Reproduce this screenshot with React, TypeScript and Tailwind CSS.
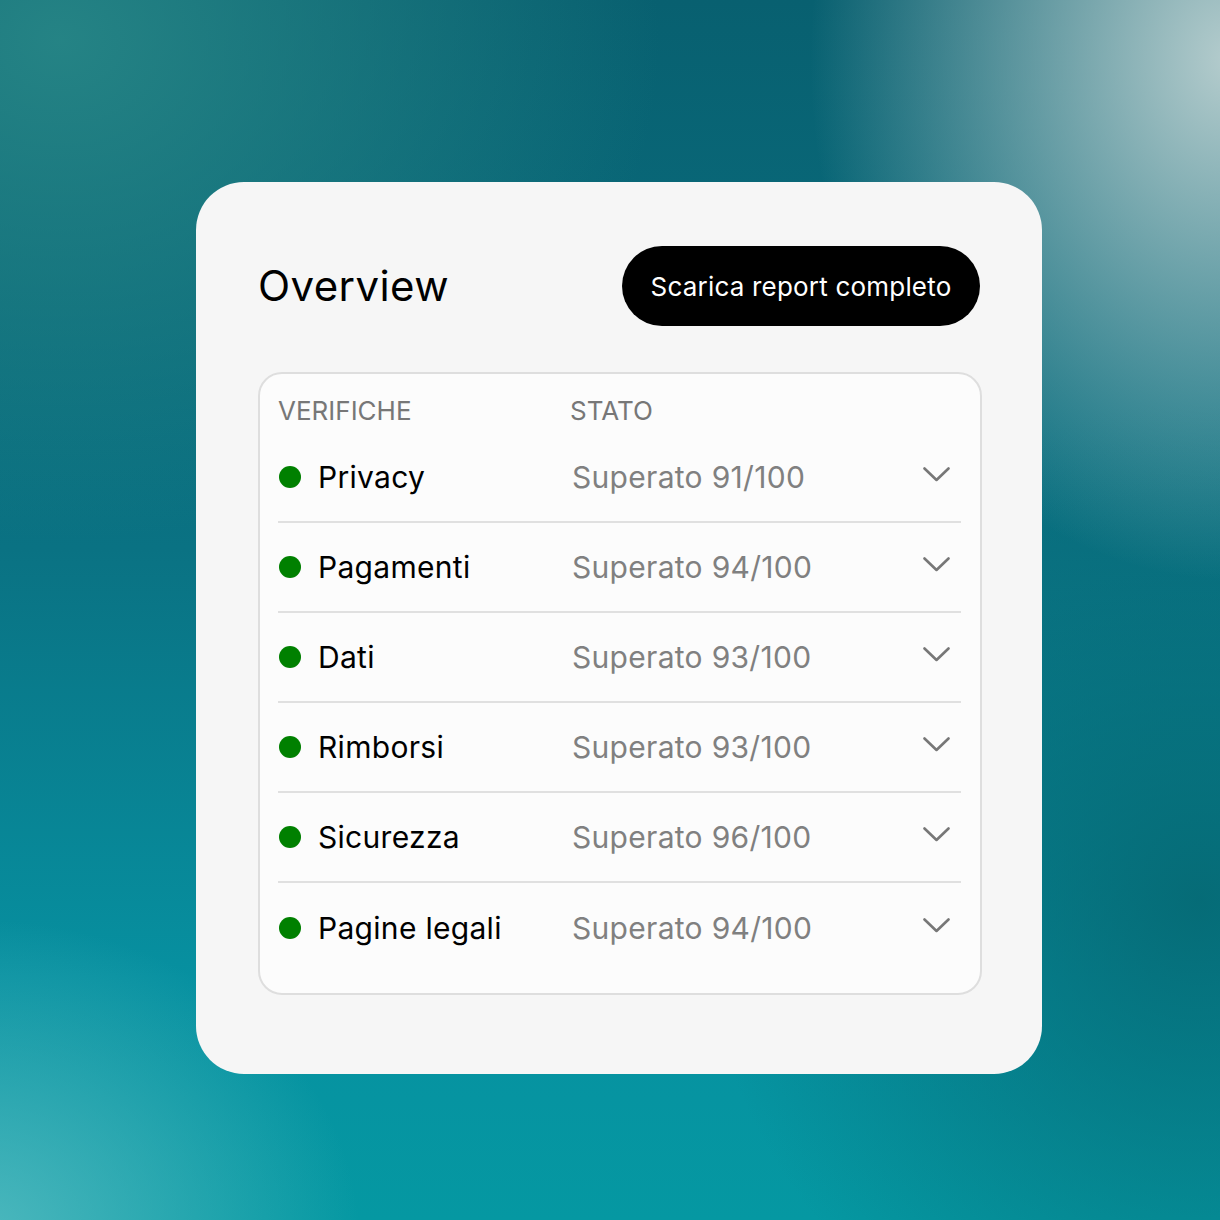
import React from "react";

const rows = [
  { name: "Privacy", status: "Superato 91/100" },
  { name: "Pagamenti", status: "Superato 94/100" },
  { name: "Dati", status: "Superato 93/100" },
  { name: "Rimborsi", status: "Superato 93/100" },
  { name: "Sicurezza", status: "Superato 96/100" },
  { name: "Pagine legali", status: "Superato 94/100" },
];

function Chevron() {
  return (
    <svg width="27" height="16" viewBox="0 0 27 16" fill="none">
      <path d="M1.5 1.5 L13.5 13 L25.5 1.5" stroke="#777777" strokeWidth="2.6" strokeLinecap="round" strokeLinejoin="round" />
    </svg>
  );
}

export default function App() {
  return (
    <div
      className="w-[1220px] h-[1220px] flex items-start justify-start pl-[196px] pt-[182px] font-['Inter',sans-serif] bg-[radial-gradient(ellipse_420px_520px_at_1230px_60px,rgba(190,210,210,0.95),rgba(190,210,210,0)_100%),radial-gradient(ellipse_380px_320px_at_-20px_1240px,rgba(90,190,195,0.85),rgba(90,190,195,0)_100%),radial-gradient(ellipse_600px_500px_at_60px_40px,rgba(40,135,135,0.9),rgba(40,135,135,0)_100%),radial-gradient(ellipse_500px_500px_at_1200px_900px,rgba(5,100,110,0.8),rgba(5,100,110,0)_100%),linear-gradient(180deg,#086070_0%,#0a7283_45%,#0790a0_80%,#0598a2_100%)]"
    >
      <div className="w-[846px] h-[892px] rounded-[48px] bg-[#f6f6f6] px-[62px] pt-[64px]">
        <div className="flex items-center justify-between">
          <h1 className="text-[42px] leading-[80px] text-black tracking-[0.4px]">Overview</h1>
          <button className="h-[80px] w-[358px] rounded-full bg-black text-white text-[26px] tracking-[0.2px]">
            Scarica report completo
          </button>
        </div>
        <div className="mt-[46px] -mr-[2px] border-2 border-[#dedede] rounded-[24px] bg-[#fcfcfc] pl-[18px] pr-[19px] pb-[20px]">
          <div className="h-[59px] pt-[22px] flex text-[26px] leading-[30px] text-[#777777]">
            <div className="w-[292px]">VERIFICHE</div>
            <div>STATO</div>
          </div>
          {rows.map((r, i) => (
            <div
              key={r.name}
              className={`h-[90px] flex items-center ${i < rows.length - 1 ? "border-b-2 border-[#e0e0e0]" : ""}`}
            >
              <div className="w-[294px] flex items-center">
                <span className="w-[22px] h-[22px] rounded-full bg-[#008000] ml-[1px] mr-[17px]" />
                <span className="text-[30px] text-black tracking-[0.3px]">{r.name}</span>
              </div>
              <div className="flex-1 text-[30px] text-[#808080] tracking-[0.3px]">{r.status}</div>
              <div className="mr-[11px] mb-[5px]">
                <Chevron />
              </div>
            </div>
          ))}
        </div>
      </div>
    </div>
  );
}
